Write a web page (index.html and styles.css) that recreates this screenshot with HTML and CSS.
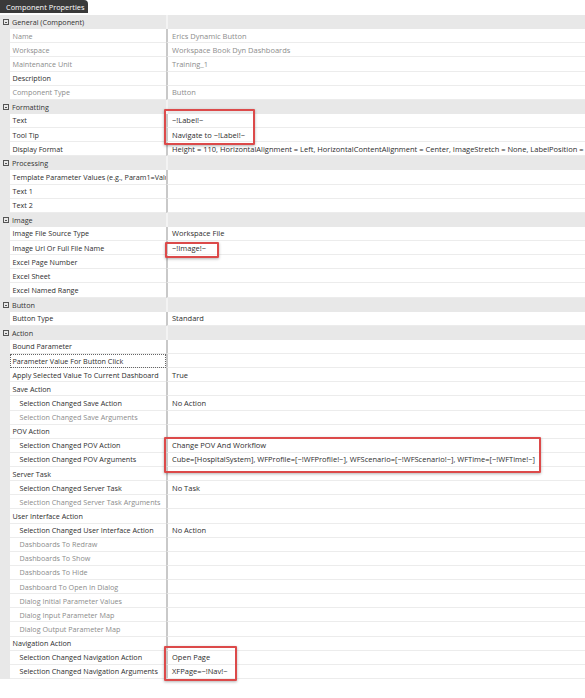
FILE: index.html
```html
<!DOCTYPE html>
<html lang="en">
<head>
<meta charset="utf-8">
<title>Component Properties</title>
<link rel="stylesheet" href="styles.css">
</head>
<body>
<div class="panel">
  <div class="tab">Component Properties</div>

  <div class="grid">
    <div class="cat"><span class="toggle"></span><span class="cat-label">General (Component)</span><span class="value"></span></div>
    <div class="row ro"><span class="gutter"></span><span class="name">Name</span><span class="value">Erics Dynamic Button</span></div>
    <div class="row ro"><span class="gutter"></span><span class="name">Workspace</span><span class="value">Workspace Book Dyn Dashboards</span></div>
    <div class="row ro"><span class="gutter"></span><span class="name">Maintenance Unit</span><span class="value">Training_1</span></div>
    <div class="row"><span class="gutter"></span><span class="name">Description</span><span class="value"></span></div>
    <div class="row ro"><span class="gutter"></span><span class="name">Component Type</span><span class="value">Button</span></div>

    <div class="cat"><span class="toggle"></span><span class="cat-label">Formatting</span><span class="value"></span></div>
    <div class="row"><span class="gutter"></span><span class="name">Text</span><span class="value">~!Label!~</span></div>
    <div class="row"><span class="gutter"></span><span class="name">Tool Tip</span><span class="value">Navigate to ~!Label!~</span></div>
    <div class="row"><span class="gutter"></span><span class="name">Display Format</span><span class="value">Height = 110, HorizontalAlignment = Left, HorizontalContentAlignment = Center, ImageStretch = None, LabelPosition = Bottom</span></div>

    <div class="cat"><span class="toggle"></span><span class="cat-label">Processing</span><span class="value"></span></div>
    <div class="row"><span class="gutter"></span><span class="name">Template Parameter Values (e.g., Param1=Value1)</span><span class="value"></span></div>
    <div class="row"><span class="gutter"></span><span class="name">Text 1</span><span class="value"></span></div>
    <div class="row"><span class="gutter"></span><span class="name">Text 2</span><span class="value"></span></div>

    <div class="cat"><span class="toggle"></span><span class="cat-label">Image</span><span class="value"></span></div>
    <div class="row"><span class="gutter"></span><span class="name">Image File Source Type</span><span class="value">Workspace File</span></div>
    <div class="row"><span class="gutter"></span><span class="name">Image Url Or Full File Name</span><span class="value">~!Image!~</span></div>
    <div class="row"><span class="gutter"></span><span class="name">Excel Page Number</span><span class="value"></span></div>
    <div class="row"><span class="gutter"></span><span class="name">Excel Sheet</span><span class="value"></span></div>
    <div class="row"><span class="gutter"></span><span class="name">Excel Named Range</span><span class="value"></span></div>

    <div class="cat"><span class="toggle"></span><span class="cat-label">Button</span><span class="value"></span></div>
    <div class="row"><span class="gutter"></span><span class="name">Button Type</span><span class="value">Standard</span></div>

    <div class="cat"><span class="toggle"></span><span class="cat-label">Action</span><span class="value"></span></div>
    <div class="row"><span class="gutter"></span><span class="name">Bound Parameter</span><span class="value"></span></div>
    <div class="row"><span class="gutter"></span><span class="name focused">Parameter Value For Button Click</span><span class="value"></span></div>
    <div class="row"><span class="gutter"></span><span class="name">Apply Selected Value To Current Dashboard</span><span class="value">True</span></div>
    <div class="row"><span class="gutter"></span><span class="name">Save Action</span><span class="value"></span></div>
    <div class="row"><span class="gutter"></span><span class="name sub">Selection Changed Save Action</span><span class="value">No Action</span></div>
    <div class="row ro"><span class="gutter"></span><span class="name sub">Selection Changed Save Arguments</span><span class="value"></span></div>
    <div class="row"><span class="gutter"></span><span class="name">POV Action</span><span class="value"></span></div>
    <div class="row"><span class="gutter"></span><span class="name sub">Selection Changed POV Action</span><span class="value">Change POV And Workflow</span></div>
    <div class="row"><span class="gutter"></span><span class="name sub">Selection Changed POV Arguments</span><span class="value">Cube=[HospitalSystem], WFProfile=[~!WFProfile!~], WFScenario=[~!WFScenario!~], WFTime=[~!WFTime!~]</span></div>
    <div class="row"><span class="gutter"></span><span class="name">Server Task</span><span class="value"></span></div>
    <div class="row"><span class="gutter"></span><span class="name sub">Selection Changed Server Task</span><span class="value">No Task</span></div>
    <div class="row ro"><span class="gutter"></span><span class="name sub">Selection Changed Server Task Arguments</span><span class="value"></span></div>
    <div class="row"><span class="gutter"></span><span class="name">User Interface Action</span><span class="value"></span></div>
    <div class="row"><span class="gutter"></span><span class="name sub">Selection Changed User Interface Action</span><span class="value">No Action</span></div>
    <div class="row ro"><span class="gutter"></span><span class="name sub">Dashboards To Redraw</span><span class="value"></span></div>
    <div class="row ro"><span class="gutter"></span><span class="name sub">Dashboards To Show</span><span class="value"></span></div>
    <div class="row ro"><span class="gutter"></span><span class="name sub">Dashboards To Hide</span><span class="value"></span></div>
    <div class="row ro"><span class="gutter"></span><span class="name sub">Dashboard To Open In Dialog</span><span class="value"></span></div>
    <div class="row ro"><span class="gutter"></span><span class="name sub">Dialog Initial Parameter Values</span><span class="value"></span></div>
    <div class="row ro"><span class="gutter"></span><span class="name sub">Dialog Input Parameter Map</span><span class="value"></span></div>
    <div class="row ro"><span class="gutter"></span><span class="name sub">Dialog Output Parameter Map</span><span class="value"></span></div>
    <div class="row"><span class="gutter"></span><span class="name">Navigation Action</span><span class="value"></span></div>
    <div class="row"><span class="gutter"></span><span class="name sub">Selection Changed Navigation Action</span><span class="value">Open Page</span></div>
    <div class="row"><span class="gutter"></span><span class="name sub">Selection Changed Navigation Arguments</span><span class="value">XFPage=~!Nav!~</span></div>
  </div>

  <!-- highlight callouts drawn over the grid -->
  <div class="callout callout-label"></div>
  <div class="callout callout-image"></div>
  <div class="callout callout-pov"></div>
  <div class="callout callout-nav"></div>
</div>
</body>
</html>
```

FILE: styles.css
```css
html, body {
  margin: 0;
  padding: 0;
  background: #ffffff;
}

.panel {
  position: relative;
  width: 585px;
  height: 698px;
  overflow: hidden;
  font-family: "Open Sans", "Noto Sans", sans-serif;
  font-size: 7.2px;
  color: #2e2e2e;
}

.tab {
  display: inline-flex;
  align-items: center;
  height: 13px;
  width: 88px;
  padding-left: 6px;
  box-sizing: border-box;
  background: #3a3a3a;
  color: #ffffff;
  font-size: 7.4px;
  border-radius: 0 4px 0 0;
  white-space: nowrap;
}

.grid {
  margin-top: 2px;
  display: flex;
  flex-direction: column;
}

.row,
.cat {
  display: grid;
  grid-template-columns: 10px 156px 1fr;
  height: 14.13px;
  align-items: stretch;
  white-space: nowrap;
}

.cat {
  background: #e8e8e8;
}

.gutter {
  background: #e8e8e8;
}

.toggle {
  position: relative;
  align-self: center;
  justify-self: start;
  margin-left: 3px;
  width: 4px;
  height: 4px;
  border: 1px solid #555;
}

.toggle::after {
  content: "";
  position: absolute;
  left: 1px;
  right: 1px;
  top: 2px;
  height: 1px;
  background: #555;
}

.cat-label {
  display: flex;
  align-items: center;
  padding-left: 2px;
  color: #333;
}

.name,
.value {
  display: flex;
  align-items: center;
  overflow: hidden;
  box-sizing: border-box;
}

.row .name,
.row .value {
  border-bottom: 1px solid #ececec;
  background: #ffffff;
}

.name {
  padding-left: 2.5px;
}

.name.sub {
  padding-left: 9.5px;
}

.name.focused {
  outline: 1px dotted #666;
  outline-offset: -1px;
}

.value {
  padding-left: 4px;
  border-left: 2px solid #c9c9c9;
  font-size: 7.5px;
}

.cat .value {
  border-left-color: #f3f3f3;
}

.ro .name,
.ro .value {
  color: #8c8c8c;
}

.callout {
  position: absolute;
  border: 2px solid #dc4a4a;
  border-radius: 1px;
  box-shadow: 0 1px 3px rgba(0, 0, 0, 0.3);
  box-sizing: border-box;
  pointer-events: none;
}

.callout-label { left: 164px; top: 109px; width: 91px; height: 36px; }
.callout-image { left: 165px; top: 242px; width: 54px; height: 16px; }
.callout-pov   { left: 164px; top: 437px; width: 377px; height: 36px; }
.callout-nav   { left: 164px; top: 646px; width: 73px; height: 35px; }
```
